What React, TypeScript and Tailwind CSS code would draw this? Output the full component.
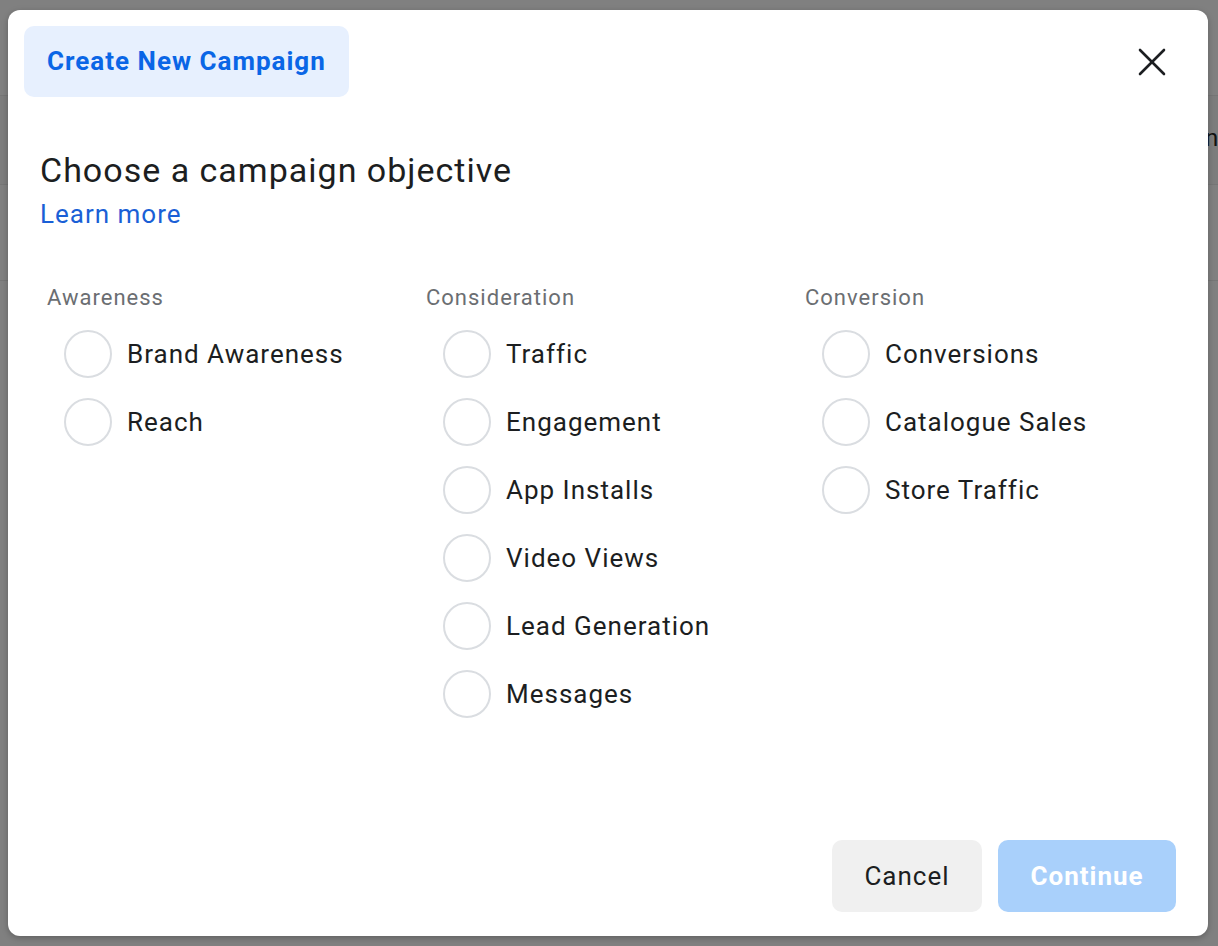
import { X } from "lucide-react";

const groups = [
  { title: "Awareness", items: ["Brand Awareness", "Reach"] },
  {
    title: "Consideration",
    items: [
      "Traffic",
      "Engagement",
      "App Installs",
      "Video Views",
      "Lead Generation",
      "Messages",
    ],
  },
  {
    title: "Conversion",
    items: ["Conversions", "Catalogue Sales", "Store Traffic"],
  },
];

function Radio({ label }: { label: string }) {
  return (
    <label className="flex h-[68px] items-center gap-[15px] pl-[17px]">
      <span className="h-[48px] w-[48px] shrink-0 rounded-full border-2 border-[#dadde1] bg-white" />
      <span className="text-[26px] tracking-[1px] text-[#1c1e21]">{label}</span>
    </label>
  );
}

export default function App() {
  return (
    <div
      className="relative h-[946px] w-[1218px] overflow-hidden bg-[#808080]"
      style={{ fontFamily: "Roboto, 'Liberation Sans', sans-serif" }}
    >
      {/* page behind the overlay */}
      <div className="absolute inset-x-0 top-[95px] h-[90px] border-y border-[#767676] bg-[#7d7d7d]" />
      <div className="absolute inset-x-0 top-[280px] border-t border-[#767676]" />
      <div className="absolute left-[1205px] top-[120px] text-[24px] text-[#111]">n</div>

      <div className="absolute left-[8px] top-[10px] flex h-[926px] w-[1200px] flex-col rounded-[12px] bg-white shadow-[0_2px_6px_rgba(0,0,0,0.25)]">
        <div className="flex items-start justify-between pl-[16px] pr-[32px] pt-[16px]">
          <div className="flex h-[71px] items-center rounded-[10px] bg-[#e7f0fe] px-[23px] text-[26px] font-bold tracking-[1px] text-[#0a66e6]">
            Create New Campaign
          </div>
          <button className="mt-[12px] text-[#1c1e21]">
            <X size={48} strokeWidth={1.3} />
          </button>
        </div>

        <div className="pl-[32px] pt-[53px]">
          <h1 className="text-[34px] leading-[40px] tracking-[1px] text-[#1c1e21]">
            Choose a campaign objective
          </h1>
          <a className="mt-[8px] block text-[26px] leading-[32px] tracking-[1px] text-[#1a5fd6]">
            Learn more
          </a>
        </div>

        <div className="mt-[54px] grid grid-cols-[379px_379px_379px] pl-[39px]">
          {groups.map((g) => (
            <div key={g.title} className="flex flex-col">
              <div className="mb-[8px] text-[22px] leading-[28px] tracking-[1px] text-[#6b6e72]">
                {g.title}
              </div>
              {g.items.map((it) => (
                <Radio key={it} label={it} />
              ))}
            </div>
          ))}
        </div>

        <div className="mt-auto flex justify-end gap-[16px] pb-[24px] pr-[32px]">
          <button className="h-[72px] w-[150px] rounded-[10px] bg-[#f0f0f0] text-[26px] tracking-[1px] text-[#1c1e21]">
            Cancel
          </button>
          <button className="h-[72px] w-[178px] rounded-[10px] bg-[#a9d0fb] text-[26px] font-bold tracking-[1px] text-white">
            Continue
          </button>
        </div>
      </div>
    </div>
  );
}
